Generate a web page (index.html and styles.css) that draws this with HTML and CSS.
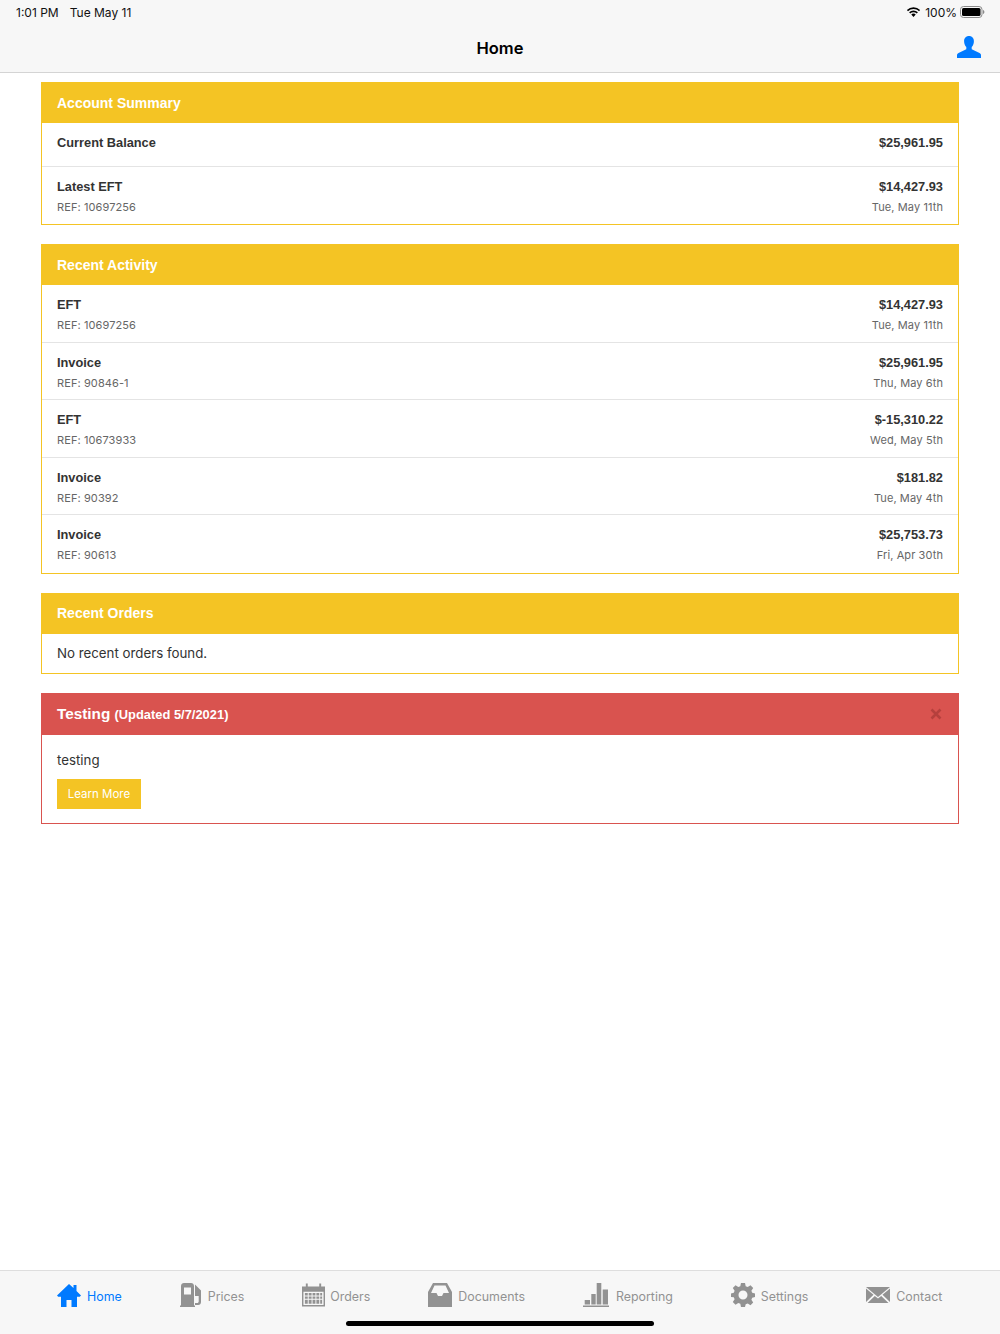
FILE: index.html
```html
<!DOCTYPE html>
<html lang="en">
<head>
    <meta charset="UTF-8">
    <meta name="viewport" content="width=device-width, initial-scale=1.0">
    <title>Home</title>
    <link rel="stylesheet" href="styles.css">
</head>
<body>
    <header class="top-bar">
        <div class="status-bar">
            <div class="status-time"><span>1:01 PM</span><span>Tue May 11</span></div>
            <div class="status-right">
                <svg class="wifi" viewBox="0 0 16 12"><path d="M8 2.200c2.300 0 4.400.9 6 2.400l1.200-1.300A10.400 10.400 0 0 0 8 .4 10.400 10.400 0 0 0 .8 3.300L2 4.600a8.700 8.700 0 0 1 6-2.400z"/><path d="M8 5.600c1.400 0 2.600.5 3.600 1.400l1.200-1.300A7 7 0 0 0 8 3.800a7 7 0 0 0-4.800 1.900L4.400 7A5.200 5.200 0 0 1 8 5.600z"/><path d="M8 7.200c-1 0-1.800.4-2.400.9L8 10.800l2.400-2.700c-.6-.5-1.400-.9-2.400-.9z"/></svg>
                <span>100%</span>
                <svg class="battery" viewBox="0 0 25 12"><rect x="0.5" y="0.5" width="21.500" height="11" rx="3" fill="none" stroke="#8a8a8a"/><rect x="2" y="2" width="18.500" height="8" rx="1.500" fill="#000"/><path d="M23 4v4c.8-.3 1.400-1 1.400-2s-.6-1.700-1.400-2z" fill="#8a8a8a"/></svg>
            </div>
        </div>
        <div class="nav-bar">
            <h1>Home</h1>
            <svg class="user-icon" viewBox="0 0 24 22"><path d="M12 0c-3 0-4.900 2.200-4.900 5.200 0 2.400.9 4.500 2.200 5.800v2.200L1.500 17C.5 17.500 0 18.300 0 19.300V22h24v-2.700c0-1-.5-1.800-1.500-2.300l-7.800-3.800V11c1.300-1.300 2.200-3.400 2.200-5.800C16.900 2.200 15 0 12 0z"/></svg>
        </div>
    </header>

    <main class="content">
        <section class="card">
            <h2 class="card-title">Account Summary</h2>
            <div class="row row-single">
                <div><div class="row-name">Current Balance</div></div>
                <div class="row-right"><div class="row-name">$25,961.95</div></div>
            </div>
            <div class="row row-last">
                <div><div class="row-name">Latest EFT</div><div class="row-sub">REF: 10697256</div></div>
                <div class="row-right"><div class="row-name">$14,427.93</div><div class="row-sub">Tue, May 11th</div></div>
            </div>
        </section>

        <section class="card">
            <h2 class="card-title">Recent Activity</h2>
            <div class="row">
                <div><div class="row-name">EFT</div><div class="row-sub">REF: 10697256</div></div>
                <div class="row-right"><div class="row-name">$14,427.93</div><div class="row-sub">Tue, May 11th</div></div>
            </div>
            <div class="row">
                <div><div class="row-name">Invoice</div><div class="row-sub">REF: 90846-1</div></div>
                <div class="row-right"><div class="row-name">$25,961.95</div><div class="row-sub">Thu, May 6th</div></div>
            </div>
            <div class="row">
                <div><div class="row-name">EFT</div><div class="row-sub">REF: 10673933</div></div>
                <div class="row-right"><div class="row-name">$-15,310.22</div><div class="row-sub">Wed, May 5th</div></div>
            </div>
            <div class="row">
                <div><div class="row-name">Invoice</div><div class="row-sub">REF: 90392</div></div>
                <div class="row-right"><div class="row-name">$181.82</div><div class="row-sub">Tue, May 4th</div></div>
            </div>
            <div class="row row-last">
                <div><div class="row-name">Invoice</div><div class="row-sub">REF: 90613</div></div>
                <div class="row-right"><div class="row-name">$25,753.73</div><div class="row-sub">Fri, Apr 30th</div></div>
            </div>
        </section>

        <section class="card">
            <h2 class="card-title">Recent Orders</h2>
            <p class="empty">No recent orders found.</p>
        </section>

        <section class="card card-alert">
            <div class="alert-title">
                <h2>Testing <small>(Updated 5/7/2021)</small></h2>
                <svg class="alert-close" viewBox="0 0 12 12"><path d="M1.500 1.500l9 9M10.500 1.500l-9 9"/></svg>
            </div>
            <div class="alert-body">
                <p>testing</p>
                <button class="learn-btn">Learn More</button>
            </div>
        </section>
    </main>

    <nav class="tab-bar">
        <div class="tab tab-active">
            <svg viewBox="0 0 24 24"><path d="M12 1l4.500 4V2h3v6l4.500 4.500-1.200 1.300H20V24h-5.500v-7h-5v7H4V13.800H1.200L0 12.500z"/></svg>
            <span>Home</span>
        </div>
        <div class="tab tab-prices">
            <svg viewBox="0 0 22 24"><path fill-rule="evenodd" d="M1 3c0-1.700 1.300-3 3-3h7c1.700 0 3 1.300 3 3v19.500h1V24H0v-1.500h1zm3 1.500v7h7v-7z"/><path d="M15 1.500l6 6V19c0 1.700-1.200 3-2.800 3H15v-2h2.200c.9 0 1.500-.6 1.500-1.500V13H15z"/></svg>
            <span>Prices</span>
        </div>
        <div class="tab tab-orders">
            <svg viewBox="0 0 24 24"><path fill-rule="evenodd" d="M0 3h4V0h2v3h12V0h2v3h4v21H0zM1.500 8.500V22.500h21V8.500z"/><path d="M3 10h3v2.500H3zm4 0h3v2.500H7zm4 0h3v2.500h-3zm4 0h3v2.500h-3zm4 0h2v2.500h-2zM3 13.500h3V16H3zm4 0h3V16H7zm4 0h3V16h-3zm4 0h3V16h-3zm4 0h2V16h-2zM3 17h3v4H3zm4 0h3v4H7zm4 0h3v4h-3zm4 0h3v4h-3zm4 0h2v4h-2z"/></svg>
            <span>Orders</span>
        </div>
        <div class="tab">
            <svg viewBox="0 0 24 24"><path fill-rule="evenodd" d="M5 0h14l5 9v15H0V9zm1.500 2.500L3 10h5.500l1.500 3h4l1.500-3H21l-3.500-7.500z"/></svg>
            <span>Documents</span>
        </div>
        <div class="tab tab-reporting">
            <svg viewBox="0 0 26 24"><path d="M0 22.500h26V24H0zM1.700 17H7v4.500H1.700zM8.300 11h4.400v10.500H8.300zM13.700 0h4.600v21.500h-4.600zM19.700 6.500H25v15h-5.300z"/></svg>
            <span>Reporting</span>
        </div>
        <div class="tab">
            <svg viewBox="0 0 24 24"><path fill-rule="evenodd" d="M10 0h4l.7 3.300 2 .8L19.500 2.300 22.200 5l-1.800 2.800.8 2L24 10.500v3.500l-2.800.7-.8 2 1.800 2.800-2.700 2.700-2.800-1.800-2 .8L14 24h-4l-.7-3.300-2-.8-2.800 1.800L1.800 19l1.800-2.800-.8-2L0 14v-3.500l2.800-.7.8-2L1.800 5l2.700-2.700 2.800 1.800 2-.8zM12 7.500a4.500 4.500 0 1 0 0 9 4.500 4.500 0 0 0 0-9z"/></svg>
            <span>Settings</span>
        </div>
        <div class="tab">
            <svg viewBox="0 0 24 24"><path d="M0 4h24L12 14z"/><path d="M0 5.500v13.500l7.500-7.200zM24 5.500v13.500l-7.500-7.200zM8.800 13L1.500 20h21l-7.300-7-3.200 2.600z"/></svg>
            <span>Contact</span>
        </div>
        <div class="home-indicator"></div>
    </nav>
</body>
</html>
```

FILE: styles.css
```css
* {
    box-sizing: border-box;
}

html, body {
    height: 100%;
}

body {
    margin: 0;
    display: flex;
    flex-direction: column;
    height: 1334px;
    overflow: hidden;
    font-family: Inter, "Liberation Sans", sans-serif;
    color: #333;
    background: #fff;
}

.top-bar {
    height: 73px;
    background: #f7f7f7;
    border-bottom: 1px solid #d4d4d4;
    flex-shrink: 0;
}

.status-bar {
    height: 24px;
    padding: 0 16px;
    display: flex;
    justify-content: space-between;
    align-items: center;
    font-size: 12px;
    color: #111;
}

.status-time span + span {
    margin-left: 11px;
}

.status-right {
    display: flex;
    align-items: center;
    gap: 3px;
    margin-right: -1px;
}

.wifi {
    width: 15px;
    height: 11px;
    margin-right: 1px;
}

.battery {
    width: 25px;
    height: 12px;
}

.nav-bar {
    height: 48px;
    display: flex;
    justify-content: center;
    align-items: center;
    position: relative;
}

.nav-bar h1 {
    margin: 0;
    font-size: 16.500px;
    font-weight: 600;
    color: #000;
}

.user-icon {
    position: absolute;
    top: 12px;
    right: 19px;
    width: 24px;
    height: 22px;
    fill: #007aff;
}

.content {
    flex: 1;
    padding: 9px 41px 0;
}

.card {
    border: 1px solid #f4c424;
    margin-bottom: 19px;
}

.card-title {
    margin: -1px -1px 0;
    height: 41px;
    padding: 0 16px;
    display: flex;
    align-items: center;
    background: #f4c424;
    color: #fff;
    font-family: "Liberation Sans", sans-serif;
    font-size: 14px;
    font-weight: 700;
}

.row {
    display: flex;
    justify-content: space-between;
    height: 57.600px;
    padding: 11px 15px 0;
    border-bottom: 1px solid #e4e4e4;
}

.row-single {
    height: 44px;
}

.row-single + .row-last {
    height: 57px;
}

.row-last {
    border-bottom: none;
}

.row-right {
    text-align: right;
}

.row-name {
    font-family: "Liberation Sans", sans-serif;
    font-size: 12.800px;
    font-weight: 700;
    line-height: 17px;
    color: #333;
}

.row-sub {
    margin-top: 5px;
    font-size: 11px;
    line-height: 15px;
    color: #666;
    letter-spacing: 0.1px;
}

.empty {
    margin: 0;
    height: 39px;
    padding: 0 15px;
    display: flex;
    align-items: center;
    font-size: 13.300px;
    color: #333;
}

.card-alert {
    border-color: #d9534f;
}

.alert-title {
    margin: -1px -1px 0;
    height: 42px;
    padding: 0 17px 0 16px;
    display: flex;
    justify-content: space-between;
    align-items: center;
    background: #d9534f;
    color: #fff;
}

.alert-title h2 {
    margin: 0;
    font-family: "Liberation Sans", sans-serif;
    font-size: 15.300px;
    font-weight: 700;
}

.alert-title small {
    font-size: 12.900px;
}

.alert-close {
    width: 12px;
    height: 12px;
    fill: none;
    stroke: #b5403d;
    stroke-width: 2.600;
}

.alert-body {
    padding: 16px 15px 14px;
}

.alert-body p {
    margin: 0 0 10px;
    font-size: 13.300px;
    line-height: 18px;
    color: #333;
}

.learn-btn {
    display: block;
    width: 84px;
    height: 30px;
    padding: 0;
    border: none;
    background: #f4c424;
    color: #fff;
    font-family: inherit;
    font-size: 11.500px;
}

.tab-bar {
    height: 64px;
    flex-shrink: 0;
    padding: 0 0 0 57px;
    background: #f7f7f7;
    border-top: 1px solid #dedede;
    display: flex;
    gap: 58px;
    position: relative;
}

.tab {
    height: 50px;
    display: flex;
    align-items: center;
    gap: 6px;
    color: #929292;
    font-size: 12.400px;
}

.tab svg {
    width: 24px;
    height: 24px;
    margin-bottom: 2px;
    fill: #929292;
}

.tab-prices svg {
    width: 22px;
}

.tab-orders {
    gap: 5px;
}

.tab-orders svg {
    width: 23px;
}

.tab-reporting {
    gap: 7px;
}

.tab-reporting svg {
    width: 26px;
}

.tab-active {
    color: #007aff;
}

.tab-active svg {
    fill: #007aff;
}

.home-indicator {
    position: absolute;
    left: 346px;
    bottom: 8px;
    width: 308px;
    height: 5px;
    border-radius: 3px;
    background: #000;
}
```
